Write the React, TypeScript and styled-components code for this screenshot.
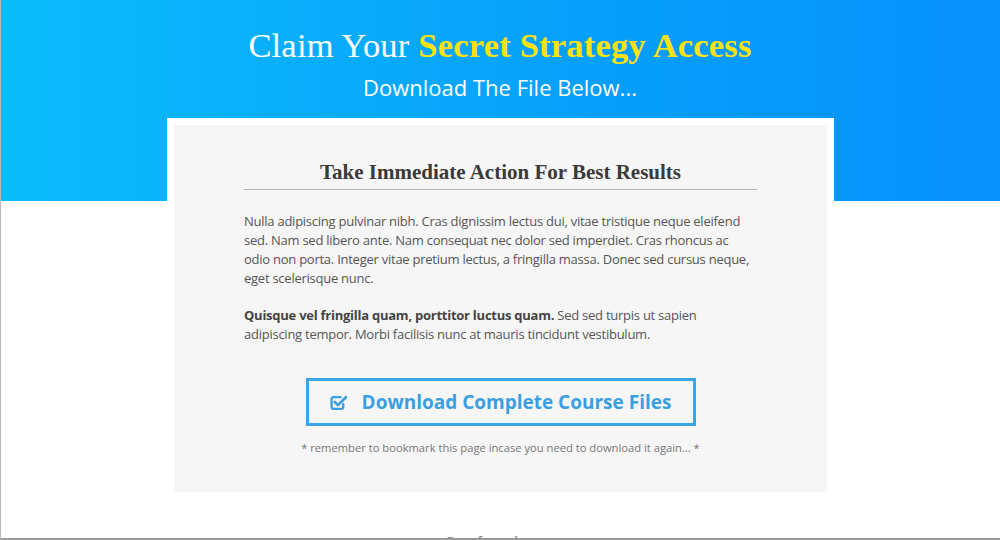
import React from 'react';
import styled, { createGlobalStyle } from 'styled-components';

const GlobalStyle = createGlobalStyle`
  html, body {
    margin: 0;
    padding: 0;
    background: #ffffff;
  }
  body {
    font-family: "Open Sans", "Liberation Sans", sans-serif;
  }
`;

// Page frame
const Page = styled.div`
  position: relative;
  height: 540px;
  overflow: hidden;
  box-sizing: border-box;
  border-left: 1px solid #b8b8b8;
  border-bottom: 2px solid #9a9a9a;
`;

const Hero = styled.header`
  background: linear-gradient(90deg, #0bbcfc 0%, #079ffb 60%, #0691fb 100%);
  height: 201px;
  margin-left: -1px;
  padding-top: 23px;
  box-sizing: border-box;
  text-align: center;
`;

const Headline = styled.h1`
  margin: 0;
  font-family: "Liberation Serif", "DejaVu Serif", serif;
  font-size: 34.5px;
  font-weight: 400;
  line-height: 44px;
  color: #ffffff;
  letter-spacing: 0.2px;
`;

const Highlight = styled.span`
  color: #fee20c;
  font-weight: 700;
`;

const Subline = styled.div`
  margin-top: 3px;
  font-size: 22px;
  line-height: 34px;
  color: #ffffff;
`;

const CardWrap = styled.div`
  margin: -83px auto 0;
  width: 667px;
  background: #ffffff;
  padding: 7px;
  box-sizing: border-box;
`;

const Card = styled.section`
  background: #f6f6f6;
  padding: 32px 70px 36px;
  text-align: left;
`;

const CardTitle = styled.h2`
  margin: 0;
  padding-bottom: 2px;
  border-bottom: 1px solid #b3b3b3;
  font-family: "Liberation Serif", "DejaVu Serif", serif;
  font-size: 21px;
  font-weight: 700;
  line-height: 30px;
  color: #3a3a3a;
  text-align: center;
`;

const Para = styled.p<{ $gap?: number }>`
  margin: ${p => p.$gap ?? 0}px 0 0;
  font-size: 13px;
  line-height: 19px;
  letter-spacing: -0.25px;
  color: #555555;

  b {
    font-weight: 700;
    color: #444444;
  }
`;

const ButtonRow = styled.div`
  display: flex;
  justify-content: center;
  margin-top: 34px;
`;

const DownloadButton = styled.a`
  display: flex;
  align-items: center;
  justify-content: center;
  gap: 14px;
  width: 390px;
  height: 48px;
  box-sizing: border-box;
  border: 3px solid #3ba4e4;
  color: #3a9fe2;
  font-size: 19px;
  font-weight: 700;
  text-decoration: none;
  cursor: pointer;
`;

const Note = styled.div`
  margin-top: 14px;
  font-size: 11.2px;
  line-height: 16px;
  color: #777777;
  text-align: center;
`;

const Footer = styled.div`
  margin-top: 33px;
  font-size: 13px;
  color: #888888;
  text-align: center;
  font-weight: 600;
`;

const CheckSquareIcon = () => (
  <svg width="18" height="17" viewBox="0 0 17 16" fill="none">
    <path
      d="M12.5 9.5 V12.5 a1.5 1.5 0 0 1 -1.5 1.5 H3 a1.5 1.5 0 0 1 -1.5 -1.5 V4.5 a1.5 1.5 0 0 1 1.5 -1.5 H10"
      stroke="#3a9fe2"
      strokeWidth="2.2"
      strokeLinecap="round"
    />
    <path
      d="M4.5 7.5 L7.5 10.5 L15 3"
      stroke="#3a9fe2"
      strokeWidth="2.6"
      strokeLinecap="round"
      strokeLinejoin="round"
    />
  </svg>
);

const App: React.FC = () => {
  return (
    <>
      <GlobalStyle />
      <Page>
        <Hero>
          <Headline>
            Claim Your <Highlight>Secret Strategy Access</Highlight>
          </Headline>
          <Subline>Download The File Below...</Subline>
        </Hero>

        <CardWrap>
          <Card>
            <CardTitle>Take Immediate Action For Best Results</CardTitle>
            <Para $gap={22}>
              Nulla adipiscing pulvinar nibh. Cras dignissim lectus dui, vitae tristique neque eleifend
              sed. Nam sed libero ante. Nam consequat nec dolor sed imperdiet. Cras rhoncus ac
              odio non porta. Integer vitae pretium lectus, a fringilla massa. Donec sed cursus neque,
              eget scelerisque nunc.
            </Para>
            <Para $gap={18}>
              <b>Quisque vel fringilla quam, porttitor luctus quam.</b> Sed sed turpis ut sapien
              adipiscing tempor. Morbi facilisis nunc at mauris tincidunt vestibulum.
            </Para>

            <ButtonRow>
              <DownloadButton>
                <CheckSquareIcon />
                Download Complete Course Files
              </DownloadButton>
            </ButtonRow>
            <Note>* remember to bookmark this page incase you need to download it again... *</Note>
          </Card>
        </CardWrap>

        <Footer>Rocofunnels.com</Footer>
      </Page>
    </>
  );
};

export default App;
